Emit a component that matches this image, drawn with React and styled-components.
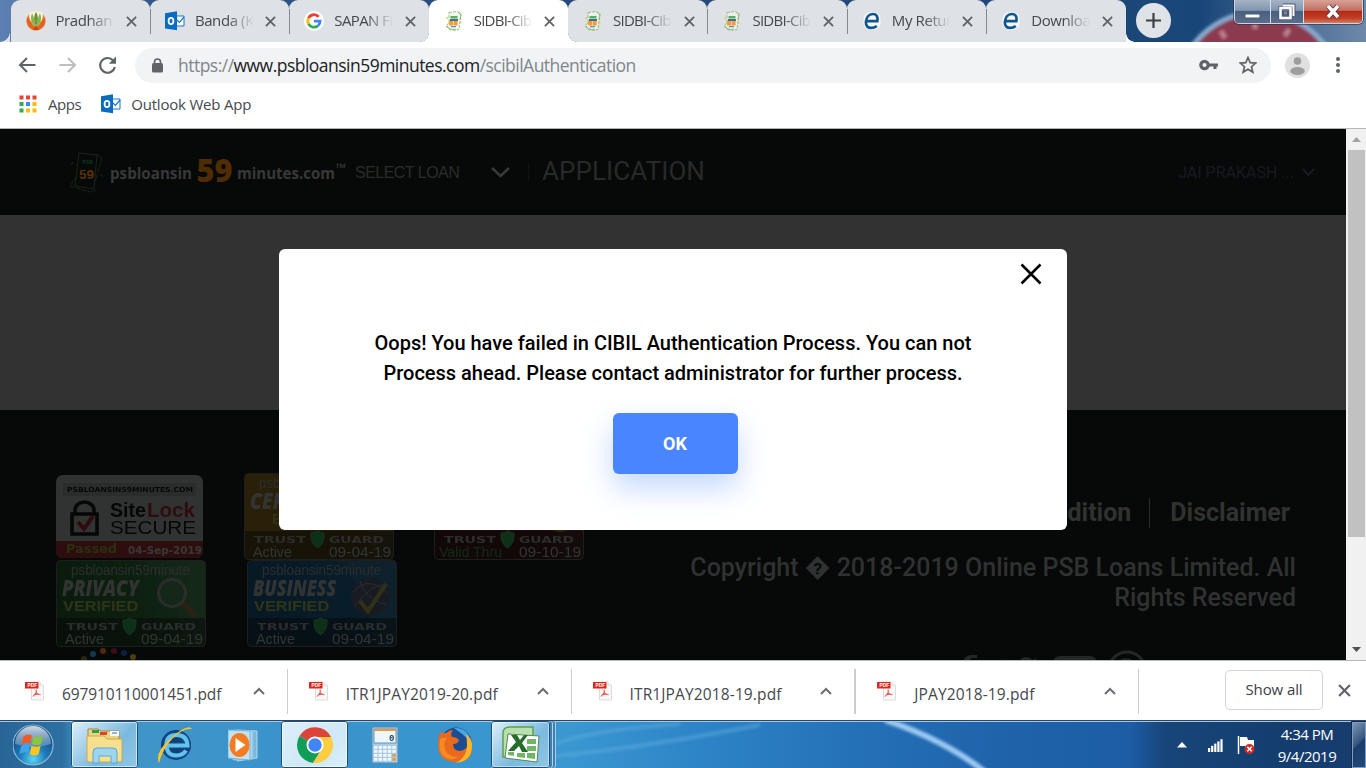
import React from 'react';
import styled, { createGlobalStyle, css } from 'styled-components';

const ui = '"Open Sans", "Noto Sans", sans-serif';

const Global = createGlobalStyle`
  * { box-sizing: border-box; }
  body { margin: 0; background: #fff; overflow: hidden; }
  svg { display: block; flex: none; }
  button { font: inherit; border: 0; padding: 0; background: none; }
`;

const Screen = styled.div`
  width: 1366px;
  height: 768px;
  display: flex;
  flex-direction: column;
  overflow: hidden;
  font-family: ${ui};
`;

/* ---------- tab strip ---------- */
const TabStrip = styled.header`
  position: relative;
  flex: none;
  height: 42px;
  display: flex;
  background: linear-gradient(90deg, #5d80b3 0, #34588c 150px, #274a7c 500px, #1f4879 1000px, #194678 1200px, #6e88a9 1366px);
`;
const Backdrop = styled.svg`
  position: absolute;
  right: 0;
  top: 0;
`;
const Tabs = styled.div`
  position: relative;
  display: flex;
  padding-left: 10.500px;
  &::before {
    content: '';
    width: 10px;
    height: 10px;
    position: absolute;
    left: 0;
    bottom: 0;
    background: radial-gradient(circle at 0 0, transparent 9.500px, #dee1e6 10px);
  }
`;
const Tab = styled.div`
  position: relative;
  width: 139.400px;
  height: 42px;
  display: flex;
  align-items: center;
  padding-left: 15px;
  background: ${(p) => (p.$active ? '#fff' : '#dee1e6')};
  border-radius: 9px 9px 0 0;
  border-bottom-right-radius: ${(p) => (p.$before ? '9px' : 0)};
  border-bottom-left-radius: ${(p) => (p.$after ? '9px' : 0)};
  ${(p) => p.$line && css`
    &::after {
      content: '';
      position: absolute;
      right: -1px;
      top: 9px;
      width: 1px;
      height: 25px;
      background: #85898f;
      z-index: 1;
    }
  `}
  ${(p) => (p.$before || p.$after) && css`
    &::before {
      content: '';
      position: absolute;
      ${p.$before ? 'right' : 'left'}: 0;
      bottom: 0;
      width: 9px;
      height: 9px;
      background: radial-gradient(circle at ${p.$before ? '0 0' : '100% 0'}, transparent 8.500px, #fff 9px);
    }
  `}
`;
const TabTitle = styled.span`
  width: 59px;
  margin: -2px 11.500px 0 10px;
  overflow: hidden;
  white-space: nowrap;
  font-size: 15px;
  letter-spacing: ${(p) => p.$ls || -0.4}px;
  line-height: 24px;
  color: #45494e;
  mask-image: linear-gradient(90deg, #000 55%, transparent 100%);
`;
const NewTab = styled.button`
  position: relative;
  width: 35px;
  height: 35px;
  margin: 3px 0 0 10px;
  border-radius: 50%;
  background: #dfe2e7;
  display: grid;
  place-items: center;
  &::before {
    content: '';
    position: absolute;
    left: -10px;
    bottom: -4px;
    width: 9px;
    height: 9px;
    background: radial-gradient(circle at 100% 0, transparent 8.500px, #fff 9px);
  }
`;
const WindowButtons = styled.div`
  position: relative;
  margin: 0 3px 0 auto;
  width: 129px;
  height: 24px;
  display: flex;
  border: 1px solid #cbd5e0;
  border-top: 0;
  border-radius: 0 0 5px 5px;
  overflow: hidden;
  box-shadow: 0 0 0 1px #22304a99;
`;
const WinButton = styled.button`
  width: ${(p) => p.$w}px;
  display: grid;
  place-items: center;
  border-right: 1px solid #d6dde5;
  background: ${(p) => (p.$close
    ? 'linear-gradient(#d8a297 0, #c26f61 45%, #b52a14 50%, #c0412a 80%, #d77b62 100%)'
    : 'linear-gradient(#a5b4c6 0, #8096b0 45%, #4a6080 50%, #5b6d8a 100%)')};
  &:last-child { border-right: 0; }
`;

/* ---------- toolbar ---------- */
const Toolbar = styled.div`
  flex: none;
  height: 45px;
  display: flex;
  align-items: center;
  padding: 1px 26px 0 17px;
`;
const NavButton = styled.button`
  width: 20px;
  height: 20px;
  margin-right: 20px;
  color: ${(p) => (p.$off ? '#bdbec0' : '#5f6368')};
`;
const AddressBar = styled.div`
  flex: 1;
  height: 35px;
  margin: 0 14px 0 -2px;
  display: flex;
  align-items: center;
  padding: 0 14px 0 16px;
  border-radius: 18px;
  background: #f1f3f4;
`;
const Url = styled.div`
  flex: 1;
  margin-left: 14px;
  font-size: 17.500px;
  line-height: 24px;
  letter-spacing: -0.520px;
  color: #80868b;
  span { color: #202124; }
`;
const KeyIcon = styled.svg`margin-right: 21px;`;
const Bookmarks = styled.nav`
  flex: none;
  height: 42px;
  display: flex;
  align-items: center;
  padding: 0 19px 7px;
  border-bottom: 1px solid #b4b5b7;
  font-size: 15px;
  color: #46494d;
`;
const Bookmark = styled.a`
  display: flex;
  align-items: center;
  gap: ${(p) => p.$gap}px;
  margin-right: 20px;
  letter-spacing: ${(p) => p.$ls}px;
  line-height: 24px;
`;

/* ---------- page ---------- */
const Viewport = styled.div`
  flex: none;
  height: 531px;
  display: flex;
`;
const Page = styled.main`
  position: relative;
  width: 1346px;
  height: 531px;
  overflow: hidden;
  background: #323232;
  font-family: Roboto, sans-serif;
`;
const SiteHeader = styled.div`
  height: 86px;
  display: flex;
  align-items: center;
  padding: 0 31px 0 70px;
  background: #070908;
  border-bottom: 1px solid #030404;
`;
const Logo = styled.svg`margin-top: 2px;`;
const LoanSelect = styled.div`
  display: flex;
  align-items: center;
  width: 174px;
  height: 18px;
  padding-top: 2px;
  border-right: 1px solid #111312;
  font: 16px "Liberation Sans", sans-serif;
  letter-spacing: -0.520px;
  color: #2b2b2b;
  svg { margin-left: 32px; }
`;
const PageTitle = styled.h1`
  margin: -2px 0 0 13px;
  font-size: 26px;
  font-weight: 400;
  letter-spacing: 0.080px;
  color: #282929;
`;
const UserMenu = styled.div`
  margin-left: auto;
  padding-top: 2px;
  display: flex;
  align-items: center;
  gap: 8px;
  font-size: 16px;
  color: #171a22;
`;
const Gap = styled.div`height: 195px;`;
const SiteFooter = styled.footer`
  height: 250px;
  display: flex;
  justify-content: space-between;
  padding: 0 50px 0 56px;
  background: #070908;
`;
const Seals = styled.div`
  padding-top: 63px;
  display: flex;
  flex-direction: column;
`;
const SealRow = styled.div`
  display: flex;
  gap: ${(p) => p.$gap}px;
  opacity: 0.2;
`;
const FooterText = styled.div`
  padding-top: 88px;
  width: 625px;
  display: flex;
  flex-direction: column;
  align-items: flex-end;
  font-size: 25px;
  font-weight: 500;
  line-height: 30px;
  text-align: right;
  color: #303131;
`;
const FooterLinks = styled.div`
  display: flex;
  font-weight: 700;
  font-size: 25px;
  padding-right: 6px;
  a + a { margin-left: 18px; padding-left: 20px; border-left: 1px solid #2b2c2c; }
`;
const Copyright = styled.p`
  margin: 25px 0 0;
  white-space: nowrap;
`;
const Social = styled.svg`margin: 36px 148px 0 0;`;

const Overlay = styled.div`
  position: absolute;
  inset: 0;
  display: flex;
  justify-content: center;
  align-items: flex-start;
  padding-top: 120px;
`;
const Dialog = styled.section`
  width: 788px;
  height: 281px;
  display: flex;
  flex-direction: column;
  align-items: center;
  border-radius: 6px;
  background: #fff;
  color: #000;
`;
const DialogClose = styled.button`
  align-self: flex-end;
  margin: 14px 25px 0 0;
  height: 22px;
`;
const Message = styled.p`
  margin: 43px 0 0;
  font-size: 20px;
  font-weight: 500;
  line-height: 30px;
  text-align: center;
  white-space: nowrap;
`;
const OkButton = styled.button`
  width: 125px;
  height: 61px;
  margin: 25px 0 0 4px;
  border-radius: 6px;
  background: #4885ff;
  color: #fff;
  font-size: 18px;
  font-weight: 700;
  box-shadow: 0 14px 30px rgba(72, 133, 255, 0.32);
`;
const ScrollTrack = styled.div`
  width: 20px;
  display: flex;
  flex-direction: column;
  align-items: center;
  background: #f1f1f1;
`;
const ScrollThumb = styled.div`
  width: 17px;
  height: 387px;
  margin-bottom: 102px;
  background: #c1c1c1;
`;
const ScrollArrow = styled.div`
  height: 21px;
  display: grid;
  place-items: center;
`;

/* ---------- downloads ---------- */
const Shelf = styled.div`
  flex: none;
  height: 60px;
  display: flex;
  border-top: 1px solid #b7b8b8;
  padding: 8px 15px 6px 4px;
  background: #fff;
`;
const Download = styled.div`
  width: 283.750px;
  height: 45px;
  display: flex;
  align-items: center;
  padding: 0 22px 1px 21px;
  border-right: ${(p) => (p.$thick ? 2 : 1)}px solid #cbcccd;
  &:nth-child(3) { width: 284.750px; }
  &:nth-child(4) { width: 282.750px; }
`;
const FileName = styled.span`
  flex: 1;
  margin: 5px 0 0 18px;
  font-size: 15.500px;
  line-height: 22px;
  letter-spacing: ${(p) => p.$ls}px;
  white-space: nowrap;
  color: #46484b;
`;
const ShelfActions = styled.div`
  margin-left: auto;
  display: flex;
  align-items: center;
  gap: 15px;
  height: 42px;
`;
const ShowAll = styled.button`
  width: 98px;
  height: 40px;
  padding-bottom: 2px;
  border: 1px solid #d2d4d7;
  border-radius: 5px;
  font-size: 15px;
  letter-spacing: -0.100px;
  color: #3c4043;
`;

/* ---------- taskbar ---------- */
const Taskbar = styled.footer`
  position: relative;
  flex: none;
  height: 48px;
  display: flex;
  border-top: 1px solid #24476c;
  box-shadow: inset 0 1px 0 #a8c8e2;
  background: linear-gradient(90deg, #286596 0, #2e6fa2 62px, #4295c6 80px, #3993cb 300px, #3a97d0 570px, #2d84c7 700px, #2571b8 850px, #1f63ab 1000px, #1c5da6 1130px, #184579 1165px, #143d6d 1290px, #173d6d 1366px);
`;
const Swoosh = styled.svg`
  position: absolute;
  left: 0;
  top: 1px;
`;
const StartButton = styled.button`
  width: 71px;
  padding-left: 13px;
  position: relative;
`;
const Tasks = styled.div`
  position: relative;
  display: flex;
  gap: 3px;
`;
const Task = styled.button`
  width: ${(p) => p.$w || 67}px;
  height: 47px;
  display: grid;
  place-items: center;
  ${(p) => p.$open && css`
    border: 1px solid #e5f2fb;
    outline: 1px solid #1d4d78;
    outline-offset: -1px;
    border-radius: 3px;
    background: linear-gradient(135deg, #dceffa, ${p.$front ? '#cfe8f7' : '#7bb9df'} 60%, ${p.$front ? '#d9f0fb' : '#8fc6e6'});
    box-shadow: inset 0 0 0 1px #ffffff99;
  `}
  ${(p) => p.$stack && css`
    border-right: 1px solid #d7ecfa;
    box-shadow: inset 0 0 0 1px #ffffff77, 2px 0 0 #3e80b2, 3px 0 0 #b5d6ec, 5px 0 0 #3e80b2, 6px 0 0 #a5cce8;
  `}
`;
const Tray = styled.div`
  position: relative;
  margin-left: auto;
  display: flex;
  align-items: center;
`;
const TrayIcon = styled.svg`margin-right: ${(p) => p.$mr}px;`;
const Clock = styled.time`
  width: 64px;
  margin-right: 13px;
  padding-top: 1px;
  font-size: 15px;
  line-height: 22px;
  letter-spacing: -0.500px;
  text-align: center;
  white-space: nowrap;
  color: #fff;
`;
const ShowDesktop = styled.div`
  width: 14px;
  height: 46px;
  margin-top: 1px;
  border: 1px solid #7f9bbd;
  outline: 1px solid #10294d;
  background: linear-gradient(135deg, #7d95b5 0, #36557f 45%, #1b3d6b 50%, #23487a 100%);
`;

/* ---------- icons ---------- */
const Cross = ({ s = 11, w = 2, c = '#5f6368' }) => (
  <svg width={s} height={s} viewBox="0 0 12 12"><path d="M1 1l10 10M11 1L1 11" stroke={c} strokeWidth={w} /></svg>
);
const Chevron = ({ w, h, c, sw = 2, up }) => (
  <svg width={w} height={h} viewBox={`0 0 ${w} ${h}`} fill="none" stroke={c} strokeWidth={sw}>
    <path d={up ? `M1 ${h - 1}L${w / 2} 2L${w - 1} ${h - 1}` : `M1 1L${w / 2} ${h - 2}L${w - 1} 1`} />
  </svg>
);
const Lotus = () => (
  <svg width="20" height="20" viewBox="0 0 20 20">
    <circle cx="10" cy="10" r="9.700" fill="#e8863a" />
    <path d="M3 2Q10-2 17 2L16 12Q10 17 4 12z" fill="#f7f3dc" />
    <path d="M10 1C12.500 5 12.500 11 10 15C7.500 11 7.500 5 10 1z" fill="#5f9a35" />
    <path d="M6 2C8.500 7 9 12 9 15C5 13 4 8 6 2zM14 2C11.500 7 11 12 11 15C15 13 16 8 14 2z" fill="#8fae4c" />
    <path d="M1 6C4 8 7 13 8.500 18.500C3 18 0 12 1 6zM19 6C16 8 13 13 11.500 18.500C17 18 20 12 19 6z" fill="#e0641f" />
    <path d="M7 19Q10 11 13 19z" fill="#c9491b" />
  </svg>
);
const Outlook = () => (
  <svg width="20" height="20" viewBox="0 0 20 20">
    <path d="M10 5h9v10h-9z" fill="#fff" stroke="#1b76c4" />
    <path d="M12 9l2.400 2.400L19 6" fill="none" stroke="#1b76c4" strokeWidth="1.200" />
    <path d="M0 2.200L12 .3v19L0 17.400z" fill="#0a6cc0" />
    <ellipse cx="6" cy="10" rx="2.400" ry="3.200" fill="none" stroke="#fff" strokeWidth="1.800" />
  </svg>
);
const Google = () => (
  <svg width="20" height="20" viewBox="0 0 20 20">
    <circle cx="10" cy="10" r="10" fill="#fff" />
    <g fill="none" strokeWidth="2.800">
      <path d="M14.700 5.800A6.200 6.200 0 0 0 4.500 7.100" stroke="#ea4335" />
      <path d="M4.500 7.100A6.200 6.200 0 0 0 4.500 12.900" stroke="#fbbc05" />
      <path d="M4.500 12.900A6.200 6.200 0 0 0 14 14.700" stroke="#34a853" />
      <path d="M10 10.200h6.100A6.200 6.200 0 0 1 14 14.700" stroke="#4285f4" />
    </g>
  </svg>
);
const Sidbi = () => (
  <svg width="20" height="20" viewBox="0 0 20 20">
    <g fill="none" stroke="#8cba72" strokeWidth=".9">
      <path d="M5 1.500l8-1 4 2-2 16-5 1-8-4 3-4z" fill="#f0f6ea" fillOpacity=".7" strokeDasharray="3 1" />
      <path d="M3 15l3 4 6-1M14 1l3 3-1 5" />
    </g>
    <path d="M6.500 5h7v2.500h-7z" fill="#4fb45e" />
    <path d="M6 8h8v2H6z" fill="#4b66a8" />
    <path d="M5 10h4v4.500H5zM9.600 10h4v4.500h-4z" fill="#f49b35" />
    <path d="M7 15h5v1.200H7z" fill="#6089c0" />
    <circle cx="16.500" cy="11.500" r="1" fill="#e5cb63" /><circle cx="3" cy="7" r="1" fill="#e5cb63" />
  </svg>
);
const Efile = () => (
  <svg width="20" height="20" viewBox="0 0 20 20">
    <rect x="1.500" y="1" width="17" height="18" rx="7" fill="#f4f8fb" />
    <path d="M4.800 10.200H15.300C16.300 5.500 14.200 3 10.800 3C6.800 3 4.200 6.500 3.900 11.200C3.700 15 6 16.900 9 16.900C11.300 16.900 13.300 16.200 14.800 14.900" fill="none" stroke="#12558c" strokeWidth="2.700" />
  </svg>
);
const Pdf = () => (
  <svg width="19" height="20" viewBox="0 0 19 20">
    <path d="M6.500 1h8L18.500 4.500V19h-12z" fill="#f8f8f8" stroke="#dcdcdc" />
    <path d="M14 1v4h4" fill="#e8e8e8" />
    <rect y="1" width="13.500" height="6.500" fill="#d52a1d" />
    <text x="2.500" y="6" fontFamily="Liberation Sans, sans-serif" fontWeight="700" fontSize="4.800" fill="#fff">PDF</text>
    <path d="M11.200 8.500v3l-3.200 4M11.200 11.500q2 2.500 4.400 2.300M9.500 13.800q3-1.200 4.600-.4" fill="none" stroke="#df5a50" strokeWidth="1.100" />
  </svg>
);

const tabs = [
  { title: 'Pradhan M', icon: <Lotus />, line: true },
  { title: 'Banda (KA', icon: <Outlook />, line: true },
  { title: 'SAPAN FI', icon: <Google />, before: true, ls: -0.6 },
  { title: 'SIDBI-Cibil', icon: <Sidbi />, active: true, ls: -0.75 },
  { title: 'SIDBI-Cibil', icon: <Sidbi />, after: true, line: true, ls: -0.75 },
  { title: 'SIDBI-Cibil', icon: <Sidbi />, line: true, ls: -0.75 },
  { title: 'My Return', icon: <Efile />, line: true },
  { title: 'Download', icon: <Efile /> },
];
const downloads = [
  { name: '697910110001451.pdf', ls: -0.1 },
  { name: 'ITR1JPAY2019-20.pdf', ls: 0.13 },
  { name: 'ITR1JPAY2018-19.pdf', ls: 0.13, thick: true },
  { name: 'JPAY2018-19.pdf', ls: 0.13 },
];

/* ---------- trust seals ---------- */
const SiteLock = () => (
  <svg width="147" height="86" viewBox="0 -2 147 86">
    <rect width="147" height="83" rx="7" fill="#d8d8da" />
    <rect x="7" y="8" width="133" height="13" fill="#bcbcbe" />
    <text x="11" y="17" fontFamily="DejaVu Sans, sans-serif" fontWeight="700" fontSize="7" textLength="126" lengthAdjust="spacingAndGlyphs">PSBLOANSIN59MINUTES.COM</text>
    <path d="M16 39h25v20H16zM19 38V35a9.500 8 0 0 1 19 0v3" fill="none" stroke="#000" strokeWidth="3.500" />
    <path d="M22 47l6 7 9-13" fill="none" stroke="#d02027" strokeWidth="4" />
    <g fontFamily="Liberation Sans, sans-serif">
      <text x="54" y="42" fontWeight="700" fontSize="20" textLength="36" lengthAdjust="spacingAndGlyphs">Site</text>
      <text x="91" y="42" fontWeight="700" fontSize="20" fill="#d02027" textLength="48" lengthAdjust="spacingAndGlyphs">Lock</text>
      <text x="54" y="59" fontSize="18" textLength="86" lengthAdjust="spacingAndGlyphs">SECURE</text>
    </g>
    <path d="M0 66h147v10q0 7-7 7H7q-7 0-7-7z" fill="#c91f28" />
    <g fontFamily="DejaVu Sans, sans-serif" fontWeight="700">
      <text x="10" y="78" fontSize="11.500" fill="#b4c82d" textLength="51" lengthAdjust="spacingAndGlyphs">Passed</text>
      <text x="72" y="79" fontSize="11" fill="#eee" textLength="74" lengthAdjust="spacingAndGlyphs">04-Sep-2019</text>
    </g>
  </svg>
);
const TrustSeal = ({ id, from, to, title, sub, subX = 7, status = 'Active', statusX = 9, statusW = 39, statusColor = '#ddd', date = '09-04-19', children }) => (
  <svg width="150" height="87" viewBox="0 0 150 87">
    <defs>
      <linearGradient id={id} x1="0" y1="0" x2="1" y2="0"><stop stopColor={from} /><stop offset="1" stopColor={to} /></linearGradient>
    </defs>
    <rect x=".5" y=".5" width="149" height="86" rx="4" fill={`url(#${id})`} stroke="#777" />
    <path d="M90 1h56q3 0 3 3v82h-20Q122 30 90 1z" fill="#fff" opacity=".1" />
    <path d="M1 58h148v25q0 3-3 3H4q-3 0-3-3z" fill="#000" opacity=".5" />
    {children}
    <g fontFamily="Liberation Sans, sans-serif">
      <text x="15" y="14.500" fontSize="14" fill="#bbb" textLength="119" lengthAdjust="spacingAndGlyphs">psbloansin59minute</text>
      <text x="6" y="36" fontFamily="Open Sans, sans-serif" fontWeight="800" fontStyle="italic" fontSize="23" fill="#ddd" textLength={title.length === 7 ? 77 : title.length * 10.4} lengthAdjust="spacingAndGlyphs">{title}</text>
      <text x={subX} y="51" fontSize="15.500" fontWeight="700" fill="#ced85a" textLength={sub.length * 9.4} lengthAdjust="spacingAndGlyphs">{sub}</text>
      <text x={statusX} y="84" fontSize="15" fill={statusColor} textLength={statusW} lengthAdjust="spacingAndGlyphs">{status}</text>
      <text x="85" y="84" fontSize="15" fill="#ddd" textLength="62" lengthAdjust="spacingAndGlyphs">{date}</text>
    </g>
    <g fontFamily="DejaVu Sans, sans-serif" fontSize="9" fontWeight="700" fill="#bbb">
      <text x="10" y="70" textLength="52" lengthAdjust="spacingAndGlyphs">TRUST</text>
      <text x="85" y="70" textLength="55" lengthAdjust="spacingAndGlyphs">GUARD</text>
    </g>
    <path d="M67 60q4 0 6.500-2 3 2 6.500 2 1 10-6.500 15Q66 70 67 60z" fill="#20d05a" stroke="#70c888" />
  </svg>
);

const App = () => (
  <Screen>
    <Global />
    <TabStrip>
      <Backdrop width="240" height="42" viewBox="0 0 240 42">
        <defs><filter id="soft"><feGaussianBlur stdDeviation="1.400" /></filter></defs>
        <g filter="url(#soft)">
          <circle cx="133" cy="94" r="82" fill="#8c3a50" stroke="#86a9cd" strokeWidth="5" />
          <path d="M95 31l4 7M129 23v6M163 29l-4 7" stroke="#bd7f90" strokeWidth="5" />
        </g>
      </Backdrop>
      <Tabs>
        {tabs.map((t, i) => (
          <Tab key={i} $active={t.active} $before={t.before} $after={t.after} $line={t.line}>
            {t.icon}
            <TabTitle $ls={t.ls}>{t.title}</TabTitle>
            <Cross />
          </Tab>
        ))}
      </Tabs>
      <NewTab>
        <svg width="15" height="15" viewBox="0 0 15 15"><path d="M7.500 0v15M0 7.500h15" stroke="#3c4043" strokeWidth="2.200" /></svg>
      </NewTab>
      <WindowButtons>
        <WinButton $w={36}>
          <svg width="17" height="22" viewBox="0 0 17 22"><rect x="1" y="13" width="15" height="4" fill="#fff" stroke="#49566d" /></svg>
        </WinButton>
        <WinButton $w={33}>
          <svg width="18" height="18" viewBox="0 0 18 18">
            <g fill="none" stroke="#49566d" strokeWidth="4"><path d="M5 2.500h10.500V13" /><rect x="2.500" y="5" width="10" height="10" /></g>
            <g fill="none" stroke="#fff" strokeWidth="2"><path d="M5 2.500h10.500V13" /></g>
            <rect x="2.500" y="5" width="10" height="10" fill="none" stroke="#fff" strokeWidth="2.600" />
            <rect x="5.500" y="8" width="4" height="4" fill="#7788a0" stroke="#49566d" />
          </svg>
        </WinButton>
        <WinButton $w={58} $close>
          <svg width="16" height="15" viewBox="0 0 16 15">
            <path d="M3 2l10 11M13 2L3 13" stroke="#5b3440" strokeWidth="5.500" />
            <path d="M3 2l10 11M13 2L3 13" stroke="#fff" strokeWidth="3.600" />
          </svg>
        </WinButton>
      </WindowButtons>
    </TabStrip>

    <Toolbar>
      <NavButton><svg width="20" height="20" viewBox="0 0 20 20" fill="none" stroke="currentColor" strokeWidth="2"><path d="M18.500 10H3.500M10 3l-7 7 7 7" /></svg></NavButton>
      <NavButton $off><svg width="20" height="20" viewBox="0 0 20 20" fill="none" stroke="currentColor" strokeWidth="2"><path d="M2.500 10h15M11 3l7 7-7 7" /></svg></NavButton>
      <NavButton>
        <svg width="20" height="20" viewBox="0 0 20 20">
          <path d="M16.200 5.500A7.400 7.400 0 1 0 17.800 12" fill="none" stroke="currentColor" strokeWidth="2.100" />
          <path d="M19 1.500v7.200h-7.200z" fill="currentColor" />
        </svg>
      </NavButton>
      <AddressBar>
        <svg width="13" height="15" viewBox="0 0 13 15">
          <rect x="1" y="5" width="11" height="9.500" rx="1.500" fill="#5f6368" />
          <path d="M3.500 6V4a3 3 0 0 1 6 0v2" fill="none" stroke="#5f6368" strokeWidth="1.600" />
        </svg>
        <Url>https://<span>www.psbloansin59minutes.com</span>/scibilAuthentication</Url>
        <KeyIcon width="19" height="12" viewBox="0 0 19 12">
          <circle cx="5.500" cy="6" r="3.700" fill="none" stroke="#5f6368" strokeWidth="3.200" />
          <path d="M9 4.500h10v3h-1.500V10h-3V7.500H9z" fill="#5f6368" />
        </KeyIcon>
        <svg width="18" height="18" viewBox="0 0 18 18"><path d="M9 1.500l2.200 5.100 5.500.5-4.200 3.600 1.300 5.400L9 13.200l-4.800 2.900 1.300-5.400L1.300 7.100l5.500-.5z" fill="none" stroke="#5f6368" strokeWidth="1.700" /></svg>
      </AddressBar>
      <svg width="25" height="25" viewBox="0 0 25 25">
        <circle cx="12.500" cy="12.500" r="12.500" fill="#e0e0e0" />
        <circle cx="12.500" cy="8" r="3.800" fill="#9e9e9e" />
        <ellipse cx="12.500" cy="18" rx="7.300" ry="4" fill="#9e9e9e" />
      </svg>
      <svg width="30" height="18" viewBox="0 0 30 18"><g fill="#5f6368"><circle cx="28" cy="3" r="2" /><circle cx="28" cy="9" r="2" /><circle cx="28" cy="15" r="2" /></g></svg>
    </Toolbar>

    <Bookmarks>
      <Bookmark $gap={11} $ls={-0.45}>
        <svg width="18" height="18" viewBox="0 0 18 18">
          {['#ea4335', '#ea4335', '#ea4335', '#34a853', '#4285f4', '#fbbc05', '#34a853', '#fbbc05', '#fbbc05'].map((c, i) => (
            <rect key={i} x={(i % 3) * 6.5 + 0.5} y={Math.floor(i / 3) * 6.5 + 0.5} width="4" height="4" fill={c} />
          ))}
        </svg>
        Apps
      </Bookmark>
      <Bookmark $gap={10} $ls={-0.2}><Outlook />Outlook Web App</Bookmark>
    </Bookmarks>

    <Viewport>
      <Page>
        <SiteHeader>
          <Logo width="285" height="46" viewBox="0 0 285 46">
            <g fill="none" stroke="#18251a">
              <path d="M9 3l18 2-3 34-19-3z" />
              <path d="M26 4l6 4-7 24M7 26l-7 10 20 6 6-2M3 12l-2 3M30 24l3 3" strokeDasharray="5 1" />
            </g>
            <g fontFamily="Open Sans, sans-serif" fontWeight="700" fill="#373838">
              <text x="12" y="14" fontSize="6" fill="#0b3317" textLength="11">PSB</text>
              <text x="9" y="29" fontFamily="Liberation Sans, sans-serif" fontSize="12" fill="#573003" textLength="15" lengthAdjust="spacingAndGlyphs">59</text>
              <text x="40" y="28.500" fontSize="16" textLength="82" lengthAdjust="spacingAndGlyphs">psbloansin</text>
              <text x="126.500" y="32" fontSize="31" fontWeight="800" fill="#4f2c02" textLength="36" lengthAdjust="spacingAndGlyphs">59</text>
              <text x="167" y="28.500" fontSize="16" textLength="98" lengthAdjust="spacingAndGlyphs">minutes.com</text>
              <text x="265.500" y="22" fontSize="12" textLength="11" lengthAdjust="spacingAndGlyphs">™</text>
            </g>
          </Logo>
          <LoanSelect>SELECT LOAN<Chevron w={19} h={11} c="#3a3a3a" sw={2.5} /></LoanSelect>
          <PageTitle>APPLICATION</PageTitle>
          <UserMenu>JAI PRAKASH ...<Chevron w={13} h={9} c="#1d2029" sw={1.8} /></UserMenu>
        </SiteHeader>
        <Gap />
        <SiteFooter>
          <Seals>
            <SealRow $gap={40.5}>
              <SiteLock />
              <TrustSeal id="gold" from="#b87a08" to="#a07212" title="CERTIFIED" sub="BUSINESS" subX={28} />
              <TrustSeal id="red" from="#7a0910" to="#8a1420" title="SECURITY" sub="SCANNED" status="Valid Thru" statusX={5} statusW={63} statusColor="#2fb055" date="09-10-19">
                <circle cx="126" cy="42" r="17" fill="#b98a18" />
              </TrustSeal>
            </SealRow>
            <SealRow $gap={41}>
              <TrustSeal id="green" from="#15651f" to="#3c9a48" title="PRIVACY" sub="VERIFIED">
                <path d="M127 43l12 12" stroke="#d27a3a" strokeWidth="4" />
                <circle cx="116" cy="33" r="13.500" fill="#4aa05a" stroke="#bbb" strokeWidth="3" />
              </TrustSeal>
              <TrustSeal id="blue" from="#075898" to="#1475bd" title="BUSINESS" sub="VERIFIED">
                <circle cx="123" cy="37" r="19" fill="#5c6588" />
                <path d="M106 32q16-18 35 2M108 46q18-24 30-21M113 21q4 17 26 24" fill="none" stroke="#aeb7d5" />
                <path d="M113 41l8 10 18-27" fill="none" stroke="#d8d44a" strokeWidth="4" />
              </TrustSeal>
            </SealRow>
            <svg width="90" height="14" viewBox="0 0 90 14">
              {[[28, 10, '#2c2610'], [37, 5, '#123a50'], [47, 2, '#53270d'], [58, 2, '#3b0e19'], [68, 4, '#0d2040'], [77, 8, '#4a3e0b']].map(([x, y, c]) => (
                <circle key={x} cx={x} cy={y + 2} r="3" fill={c} />
              ))}
            </svg>
          </Seals>
          <FooterText>
            <FooterLinks><a>Terms &amp; Condition</a><a>Disclaimer</a></FooterLinks>
            <Copyright>Copyright � 2018-2019 Online PSB Loans Limited. All<br />Rights Reserved</Copyright>
            <Social width="188" height="42" viewBox="0 0 188 42">
              <g fill="#252727">
                <path d="M17 6h-5q-9 0-9 10v20h7V18h6v-6h-6q0-3 3-3h4z" />
                <path d="M44 13q7 7 15 7-1-12 7-12 4 0 6 3l5-2-3 5 4-1-4 4q0 16-17 17-8 0-13-4 7 0 11-4-6-1-7-5 3 0 3-1-6-2-6-10z" />
                <rect x="93" y="7" width="44" height="32" rx="7" />
              </g>
              <circle cx="167" cy="21" r="18" fill="none" stroke="#252727" strokeWidth="3" />
              <path d="M157 19q3-10 13-7 6 3 4 12" fill="none" stroke="#252727" strokeWidth="4" />
            </Social>
          </FooterText>
        </SiteFooter>
        <Overlay>
          <Dialog>
            <DialogClose>
              <svg width="22" height="22" viewBox="0 0 22 22"><path d="M1.500 1.500l19 19M20.500 1.500l-19 19" stroke="#000" strokeWidth="2.500" /></svg>
            </DialogClose>
            <Message>Oops! You have failed in CIBIL Authentication Process. You can not<br />Process ahead. Please contact administrator for further process.</Message>
            <OkButton>OK</OkButton>
          </Dialog>
        </Overlay>
      </Page>
      <ScrollTrack>
        <ScrollArrow><svg width="9" height="5" viewBox="0 0 9 5"><path d="M0 5L4.500 0 9 5z" fill="#a3a3a3" /></svg></ScrollArrow>
        <ScrollThumb />
        <ScrollArrow><svg width="9" height="5" viewBox="0 0 9 5"><path d="M0 0l4.500 5L9 0z" fill="#505050" /></svg></ScrollArrow>
      </ScrollTrack>
    </Viewport>

    <Shelf>
      {downloads.map((d) => (
        <Download key={d.name} $thick={d.thick}>
          <Pdf />
          <FileName $ls={d.ls}>{d.name}</FileName>
          <Chevron w={12} h={8} c="#6b6f73" up />
        </Download>
      ))}
      <ShelfActions><ShowAll>Show all</ShowAll><Cross s={13} /></ShelfActions>
    </Shelf>

    <Taskbar>
      <Swoosh width="1366" height="46" viewBox="0 0 1366 46">
        <g fill="none" filter="url(#soft)">
          <path d="M885-2Q945 18 985 50" stroke="#9cc9f2" strokeWidth="6" />
          <path d="M555 34Q640 26 760 3M555 22Q590 8 680 2" stroke="#5ba9dd" strokeWidth="4" opacity=".55" />
        </g>
      </Swoosh>
      <StartButton>
        <svg width="42" height="44" viewBox="0 0 42 44">
          <defs>
            <radialGradient id="orb" cx=".5" cy=".85" r=".8"><stop stopColor="#5cd4f4" /><stop offset=".4" stopColor="#1d7dbc" /><stop offset="1" stopColor="#123e73" /></radialGradient>
            <linearGradient id="gloss" x2="0" y2="1"><stop stopColor="#f2f7fb" stopOpacity=".85" /><stop offset="1" stopColor="#a6bfd6" stopOpacity=".35" /></linearGradient>
          </defs>
          <circle cx="20" cy="22" r="20" fill="url(#orb)" stroke="#8fb8d6" strokeWidth="1.200" />
          <path d="M2 21A18 18 0 0 1 38 21Q20 27 2 21z" fill="url(#gloss)" />
          <path d="M10 14q4-4 9-1.500l-1.500 8q-4.500-2-9 1.500z" fill="#ef5b26" />
          <path d="M20.500 13q4.500 2.500 9.500-.5l-2 8.500q-4.500 2.500-9 0z" fill="#8cc63e" />
          <path d="M8 23.500q4.500-3.500 9-1.500l-1.600 8q-4.400-2-9 1.500z" fill="#3fa5e8" />
          <path d="M18.500 22.500q4.500 2.500 9.200 0l-2 8.500q-4.500 3-9 0z" fill="#fcc624" />
        </svg>
      </StartButton>
      <Tasks>
        <Task $open>
          <svg width="38" height="40" viewBox="0 0 38 40">
            <path d="M2 4h10l3 2h18v10H2z" fill="#eed283" stroke="#ae8637" />
            <path d="M6 5h7v3H6z" fill="#2c9f4b" /><path d="M14 7h7v3h-7z" fill="#d94630" /><path d="M24 6h9v5h-9z" fill="#f6f9fb" /><path d="M26 8h5" stroke="#3972b5" />
            <path d="M1 11h17l3 3h15v21q0 2-2 2H3q-2 0-2-2z" fill="#f6e08f" stroke="#cda848" />
            <path d="M7 27q0-4 4-4h16q4 0 4 4v11h-6v-7H13v7H7z" fill="#9dd5ee" stroke="#5ba8cf" />
          </svg>
        </Task>
        <Task>
          <svg width="40" height="40" viewBox="0 0 40 40">
            <defs><radialGradient id="ie"><stop stopColor="#9fe4fb" /><stop offset=".6" stopColor="#2389cf" /><stop offset="1" stopColor="#0c4c92" /></radialGradient></defs>
            <circle cx="21" cy="20" r="15" fill="#123f78" />
            <path d="M11 20.500h21.500Q32 9.500 21.500 9.500T11 20.500Q11 31 21 31q7 0 10.500-5.500" fill="none" stroke="#104d87" strokeWidth="6.500" />
            <path d="M11.500 20.500h21Q32 10 21.500 10T11.500 20.500Q12 30.500 21 30.500q7 0 10-5" fill="none" stroke="#64c2ec" strokeWidth="4" />
            <path d="M4 38Q-1 28 16 13T37 4q-9-1-19 9T4 38z" fill="#f6c431" />
          </svg>
        </Task>
        <Task>
          <svg width="34" height="36" viewBox="0 0 34 36">
            <path d="M9 3l20 1v27l-20 3z" fill="#79b8dc" stroke="#b4d9ec" /><path d="M5 3l20 1v28L5 33z" fill="#a9d6ec" stroke="#8cc0dc" />
            <path d="M0 3l22 1v29L0 31z" fill="#c2e2f1" stroke="#7fb4d4" />
            <ellipse cx="11.500" cy="18" rx="10" ry="12" fill="#f47b20" /><path d="M7.500 11l10 7-10 7z" fill="#fff" />
          </svg>
        </Task>
        <Task $open $front>
          <svg width="36" height="38" viewBox="0 0 36 38">
            <path d="M18 19L2.500 10A18 18 0 0 1 34 11H18z" fill="#dc4437" />
            <path d="M18 19L2.500 10A18 18 0 0 0 16 37l8-13z" fill="#109d58" />
            <path d="M18 11h16A18 18 0 0 1 16 37l9-14z" fill="#ffcd42" />
            <circle cx="18" cy="19" r="8.500" fill="#fff" /><circle cx="18" cy="19" r="6.700" fill="#4285f4" />
          </svg>
        </Task>
        <Task>
          <svg width="28" height="38" viewBox="0 0 28 38">
            <rect x="1" y="1" width="26" height="36" rx="1.500" fill="#aacce4" stroke="#5689b4" />
            <rect x="3" y="3" width="22" height="14" fill="#edf6fb" stroke="#6796bb" /><path d="M3 4h22" stroke="#ee9638" strokeWidth="2" />
            <text x="18" y="15" fontFamily="Liberation Mono, monospace" fontSize="9" fontWeight="700" fill="#244260">0</text>
            {[0, 1, 2, 3].flatMap((r) => [0, 1, 2, 3, 4].map((k) => (
              <rect key={`${r}-${k}`} x={3 + k * 4.6} y={20 + r * 4} width="3.400" height="2.800" fill={k === 4 && r > 1 ? '#e99b3e' : '#f2f8fc'} />
            )))}
          </svg>
        </Task>
        <Task>
          <svg width="36" height="38" viewBox="0 0 36 38">
            <circle cx="19" cy="17" r="15.500" fill="#1c4d94" /><path d="M17 2q14-1 17 14-8-8-17-14z" fill="#4aa6df" />
            <path d="M3 6q2 2 6 1 3-3 7-3-3 4-1 7 5 0 7 3-1 4-6 4 0 7 7 7 9-1 10-14 7 23-11 25Q2 37 1 20q0-8 2-14z" fill="#ea6a1d" />
            <path d="M29 8q7 6 6 13-1 15-17 16 12-5 12-18 0-6-1-11z" fill="#f9b62b" />
            <path d="M3 13q3-2 7-1-4 4-2 11 3 8 13 8-8 5-15-1-5-6-3-17z" fill="#f58a24" />
          </svg>
        </Task>
        <Task $open $stack $w={59}>
          <svg width="38" height="38" viewBox="0 0 38 38">
            <path d="M1 7q0-6 7-6h23v30H1z" fill="#b9dfae" stroke="#5d9e50" strokeWidth="1.500" />
            <path d="M6 8l31 2-2 26L3 32z" fill="#fff" stroke="#518c49" />
            <g fill="#73b568"><path d="M25 13h9v5h-9zM25 20h9v5h-9zM25 27h8v6l-8-1zM15 27h8v5l-8-1zM6 26h6v4l-6-1z" /></g>
            <path d="M9 9h6l3 5 4-5h4l-6 8 6 9h-6l-3-6-5 5H6l8-9z" fill="#246d2d" />
          </svg>
        </Task>
      </Tasks>
      <Tray>
        <TrayIcon $mr={20.5} width="10" height="6" viewBox="0 0 10 6"><path d="M0 5.500L5 0l5 5.500z" fill="#fff" /></TrayIcon>
        <TrayIcon $mr={13} width="16" height="16" viewBox="0 0 16 16">
          <g fill="#fff">{[0, 1, 2, 3, 4].map((i) => <rect key={i} x={i * 3.1} y={11 - i * 2.2} width="2.200" height={4 + i * 2.2} />)}</g>
        </TrayIcon>
        <TrayIcon $mr={20.5} width="18" height="20" viewBox="0 0 18 20">
          <path d="M1.500 1v18" stroke="#fff" strokeWidth="1.500" />
          <path d="M3 2h7l1 3h6v8H9l-1-2H3z" fill="#fff" />
          <circle cx="12.500" cy="14" r="5" fill="#d7281f" /><path d="M10.300 11.800l4.400 4.400M14.700 11.800l-4.400 4.400" stroke="#fff" strokeWidth="1.500" />
        </TrayIcon>
        <Clock>4:34 PM<br />9/4/2019</Clock>
        <ShowDesktop />
      </Tray>
    </Taskbar>
  </Screen>
);

export default App;
